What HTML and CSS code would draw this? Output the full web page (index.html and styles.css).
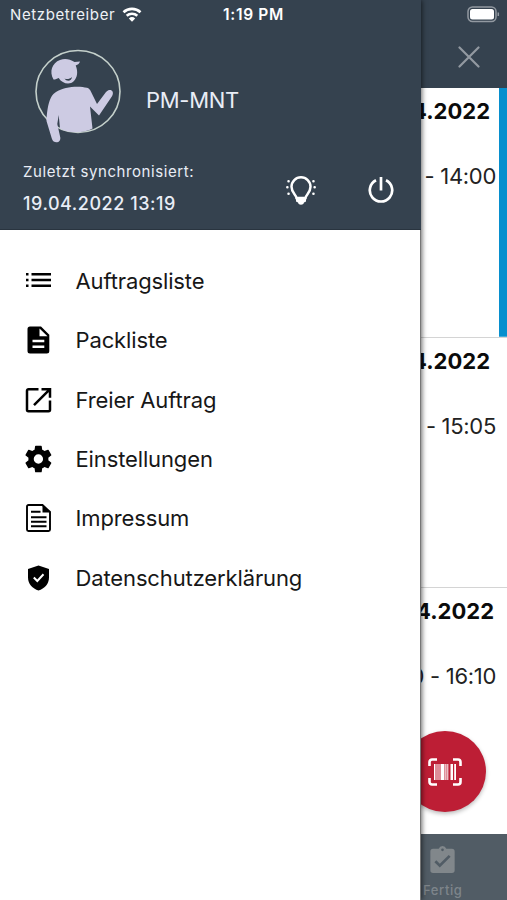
FILE: index.html
```
<!DOCTYPE html>
<html lang="de">
<head>
<meta charset="utf-8">
<meta name="viewport" content="width=device-width, initial-scale=1">
<title>PM-MNT</title>
<link rel="stylesheet" href="styles.css">
</head>
<body>
<div class="screen">
  <main class="app">
    <header class="app-bar">
      <svg class="close" viewBox="0 0 22 22"><path d="M1.5 1.5 20.5 20.5M20.5 1.5 1.5 20.5"/></svg>
    </header>
    <section class="orders">
      <article class="order active"><b class="date">4.2022</b><span class="time">- 14:00</span></article>
      <article class="order"><b class="date">4.2022</b><span class="time">- 15:05</span></article>
      <article class="order late"><b class="date">4.2022</b><span class="time">0 - 16:10</span></article>
    </section>
    <footer class="tabs">
      <svg class="tab-icon" viewBox="3 1 18 20"><path fill-rule="evenodd" d="M19 3h-4.2a3 3 0 0 0-5.6 0H5a2 2 0 0 0-2 2v14a2 2 0 0 0 2 2h14a2 2 0 0 0 2-2V5a2 2 0 0 0-2-2zM12 2.8a1 1 0 1 1 0 2 1 1 0 0 1 0-2zM10 17l-4-4 1.4-1.4L10 14.200l6.600-6.600L18 9z"/></svg>
      <span class="tab-label">Fertig</span>
    </footer>
  </main>

  <button class="scan" aria-label="Scan">
    <svg viewBox="0 0 34 28">
      <path class="frame" d="M1.500 8V4a2.500 2.500 0 0 1 2.500-2.500H9M25 1.500h5A2.500 2.500 0 0 1 32.500 4v4M32.500 20v4a2.500 2.500 0 0 1-2.500 2.500h-5M9 26.500H4A2.500 2.500 0 0 1 1.500 24v-4"/>
      <path class="bars" d="M6 6h1.500v16H6zM8.500 6h1v16h-1zM10.500 6h1v16h-1zM12.500 6h4v16h-4zM17.300 6h1.200v16h-1.200zM19.300 6h1v16h-1zM22.500 6h2.500v16h-2.500zM26.200 6h1.800v16h-1.800z"/>
    </svg>
  </button>

  <aside class="drawer">
    <header class="profile">
      <div class="user">
        <svg class="avatar" viewBox="0 0 90 96">
          <ellipse class="ring" cx="45" cy="43.500" rx="42" ry="41"/>
          <path d="M20.500 31.500c-4.500-8-1.500-16.500 6.500-19.500 5-1.800 9.500-1 14.500 2l5.500-.500c-.500 2-2 3.200-4.300 4 2.500 6 1.800 12-2 15.700-4 4-11.500 2.500-15-3.300-1.800.800-3.500 1.700-5.200 1.600z"/>
          <path d="M23 44c8-5.500 23-6.500 31-4.200 2 .600 3 1.800 4 4l6 12.200 9-12c4-4.500 9-1 6 4.200L66 67.500 57 58.500l2.500 22c-9 5-24 5-32.500 0l-1.300-13.500-1.400 9 3 13.500c.700 6-7 6.500-8.500 1L13.500 73c.500-10 2-25 9.500-29z"/>
          <path class="smile" d="M31.500 30.500c2.500 1.200 5.300.500 7.500-1.500-.300 4-5 5.200-7.500 1.500z"/>
        </svg>
        <span class="name">PM-MNT</span>
      </div>
      <div class="sync">
        <div class="sync-text">
          <span class="sync-label">Zuletzt synchronisiert:</span>
          <span class="sync-date">19.04.2022 13:19</span>
        </div>
        <svg class="bulb" viewBox="0 0 30 30">
          <path class="line" d="M10.500 22c0-3-5-5-5-11.200a9.500 9.500 0 0 1 19 0c0 6.200-5 8.200-5 11.200z"/>
          <path class="base" d="M10 21.500h10v4l-2 1c-.500 3-5.500 3-6 0l-2-1z"/>
          <path class="dots" d="M2.500 5.200h.1M1.300 11.200h.1M2.500 17.700h.1M27.400 5.200h.1M28.600 11.200h.1M27.400 17.700h.1"/>
        </svg>
        <svg class="power" viewBox="0 0 26 27"><path d="M13 1v13.500M8 4.300a11.200 11.200 0 1 0 10 0"/></svg>
      </div>
    </header>
    <nav class="menu">
      <a class="item"><svg viewBox="0 0 28 28"><path d="M2 6h2.500v2.500H2zM7.500 6H27v2.500H7.500zM2 11.700h2.500v2.500H2zM7.500 11.700H27v2.500H7.500zM2 17.400h2.500v2.500H2zM7.500 17.400H27v2.500H7.500z"/></svg><span>Auftragsliste</span></a>
      <a class="item"><svg viewBox="0 0 28 28"><path fill-rule="evenodd" d="M6 .500H17l8.300 8.300V25a2.500 2.500 0 0 1-2.500 2.500H6A2.500 2.500 0 0 1 3.500 25V3A2.500 2.500 0 0 1 6 .500zM15.500 2.500V10.300h8zM8.500 13.800v2.400H20.300v-2.400zM8.500 19.500v2.400H20.300v-2.400z"/></svg><span>Packliste</span></a>
      <a class="item"><svg viewBox="0 0 28 28"><path class="stroke" d="M14.500 3.200H4.500A1.500 1.500 0 0 0 3 4.700v19a1.500 1.500 0 0 0 1.500 1.500h20a1.500 1.500 0 0 0 1.500-1.500V14.500M17.500 3.200H26v8.500M25.500 3.700 10 19.200"/></svg><span>Freier Auftrag</span></a>
      <a class="item"><svg viewBox="1.200 1.500 21 21"><path d="M19.430 12.980c.04-.32.07-.64.07-.98s-.03-.66-.07-.98l2.110-1.650a.5.5 0 0 0 .12-.64l-2-3.460a.5.5 0 0 0-.61-.22l-2.490 1a7.300 7.300 0 0 0-1.690-.98l-.38-2.650A.49.49 0 0 0 14 2h-4a.49.49 0 0 0-.49.42l-.38 2.650c-.61.250-1.170.590-1.690.980l-2.490-1a.49.49 0 0 0-.61.220l-2 3.460a.49.49 0 0 0 .12.640l2.110 1.650c-.04.320-.07.650-.07.980s.03.660.07.980l-2.110 1.650a.5.5 0 0 0-.12.640l2 3.460c.12.220.39.300.61.220l2.490-1c.52.400 1.080.730 1.690.980l.38 2.650c.03.240.24.420.49.420h4c.25 0 .46-.18.49-.42l.38-2.650c.61-.25 1.170-.59 1.690-.98l2.490 1c.23.090.49 0 .61-.22l2-3.460a.5.5 0 0 0-.12-.64zM12 15.500a3.500 3.500 0 1 1 0-7 3.500 3.500 0 0 1 0 7z"/></svg><span>Einstellungen</span></a>
      <a class="item"><svg viewBox="0 0 28 28"><path class="thin" d="M18.500 1H4.500A1.500 1.500 0 0 0 3 2.500v23A1.500 1.500 0 0 0 4.500 27h20a1.500 1.500 0 0 0 1.500-1.500V8zM7 7.700H16.500M7 13.200H22.500M7 17.700H22.500M7 22.200H22.500"/><path d="M18.500 1 26 8.500h-7.500z"/></svg><span>Impressum</span></a>
      <a class="item"><svg viewBox="0 0 28 28"><path d="M14.500 1.500 25 5v8.500c0 6.500-4.500 11-10.500 13C8.500 24.500 4 20 4 13.500V5z"/><path class="check" d="m9.800 13.500 3.500 3.500 6.200-6.700"/></svg><span>Datenschutzerklärung</span></a>
    </nav>
  </aside>

  <div class="status">
    <span class="carrier">Netzbetreiber</span>
    <svg class="wifi" viewBox="0 0 20 15"><path d="M1.500 5.300a12.300 12.300 0 0 1 17 0M4.700 8.800a7.700 7.700 0 0 1 10.600 0"/><path class="fill" d="M6.800 11.500a4.700 4.700 0 0 1 6.400 0L10 14.700z"/></svg>
    <span class="clock">1:19 PM</span>
    <svg class="battery" viewBox="0 0 33 17"><rect class="case" x="1" y="1" width="28" height="14.500" rx="4.500"/><rect class="charge" x="3" y="3" width="24" height="10.500" rx="2.500"/><path class="case" d="M31.300 6.500v3.500"/></svg>
  </div>
</div>
</body>
</html>
```

FILE: styles.css
```
* { box-sizing: border-box; }
body { margin: 0; font-family: Inter, "Liberation Sans", sans-serif; }
svg { display: block; flex: none; }
.screen { position: relative; width: 507px; height: 900px; overflow: hidden; background: #fff; }

.app { display: grid; grid-template-rows: 88px 1fr 66px; height: 100%; }
.app-bar { display: flex; justify-content: flex-end; padding: 46px 27px 0 0; background: #35424f; }
.close { width: 22px; height: 22px; fill: none; stroke: #9299a1; stroke-width: 2.2; stroke-linecap: round; }
.orders { display: grid; grid-template-rows: 249.500px 250px 1fr; }
.order { display: flex; flex-direction: column; align-items: flex-end; border-bottom: 1px solid #d4d4d4; padding: 8px 17px 0 0; color: #0b0b0b; }
.order:last-child { border-bottom: 0; }
.active { border-bottom-color: #d4d4d4; background: linear-gradient(#078fce, #078fce) right / 8px 100% no-repeat; }
.late { padding-right: 13px; }
.date { font-size: 22px; line-height: 30px; letter-spacing: 0; }
.time { margin: 35px -6px 0 0; font-size: 22px; line-height: 30px; letter-spacing: -0.3px; color: #222; }
.late .time { margin-right: -2px; }
.tabs { display: flex; flex-direction: column; padding: 12px 0 0 423px; background: #515c65; color: #7e858b; }
.tab-icon { width: 25px; height: 27px; margin-left: 7px; fill: #81878b; }
.tab-label { margin-top: 9px; font-size: 13px; line-height: 16px; letter-spacing: 0.6px; font-weight: 500; }

.scan { position: absolute; left: 404px; top: 731px; width: 82px; height: 81px; display: flex; align-items: center; justify-content: center; padding: 0; border: 0; border-radius: 50%; background: #bd1e35; box-shadow: 0 2px 4px #0004; }
.scan svg { width: 34px; height: 28px; }
.frame { fill: none; stroke: #fff; stroke-width: 2.6; }
.bars { fill: #fff; }

.drawer { position: absolute; left: 0; top: 0; width: 421px; height: 900px; background: #fff; border-right: 1px solid #777; box-shadow: 1px 0 5px #0009; }
.profile { height: 230px; margin-right: -1px; padding: 48px 0 0 23px; border-bottom: 1px solid #29343f; background: #35424f; color: #e9edf6; }
.user { display: flex; align-items: center; gap: 23px; height: 96px; margin-left: 10px; }
.avatar { width: 90px; height: 96px; fill: #cdcbe3; }
.ring { fill: none; stroke: #c4d0cb; stroke-width: 1.6; }
.smile { fill: #35424f; }
.name { margin-top: 8px; font-size: 22px; line-height: 30px; letter-spacing: -0.3px; }
.sync { display: flex; height: 80px; }
.sync-text { display: flex; flex-direction: column; width: 263px; padding-top: 18px; }
.sync-label { font-size: 15px; line-height: 20px; letter-spacing: 0.57px; }
.sync-date { margin-top: 10px; font-size: 18px; font-weight: 500; line-height: 24px; letter-spacing: 0.54px; }
.bulb { width: 30px; height: 30px; margin-top: 32px; fill: #fff; stroke: #fff; }
.line { fill: none; stroke-width: 2.5; }
.base { stroke: none; }
.dots { stroke-width: 2.5; stroke-linecap: round; }
.power { width: 26px; height: 27px; margin: 32px 0 0 52px; fill: none; stroke: #fff; stroke-width: 2.7; }

.menu { display: flex; flex-direction: column; padding: 21.5px 0 0 24px; }
.item { display: flex; align-items: center; gap: 23.5px; height: 59.3px; font-size: 22px; letter-spacing: -0.13px; color: #171717; }
.item svg { width: 28px; height: 28px; fill: #000; }
.item .stroke, .item .thin { fill: none; stroke: #000; stroke-width: 2.5; }
.item .thin { stroke-width: 1.9; }
.item .check { fill: none; stroke: #fff; stroke-width: 2; }

.status { position: absolute; inset: 0 0 auto; display: flex; align-items: center; height: 29px; padding-left: 10px; color: #fff; }
.carrier { width: 112px; font-size: 15px; letter-spacing: 0.6px; color: #eef1f5; }
.wifi { width: 20px; height: 15px; fill: none; stroke: #fff; stroke-width: 2.6; }
.wifi .fill { fill: #fff; stroke: none; }
.clock { width: 244px; margin-left: 81px; font-size: 15.5px; font-weight: 600; letter-spacing: 0.7px; }
.battery { width: 33px; height: 17px; }
.case { fill: none; stroke: #9299a1; stroke-width: 1.5; }
.charge { fill: #fff; }
```
